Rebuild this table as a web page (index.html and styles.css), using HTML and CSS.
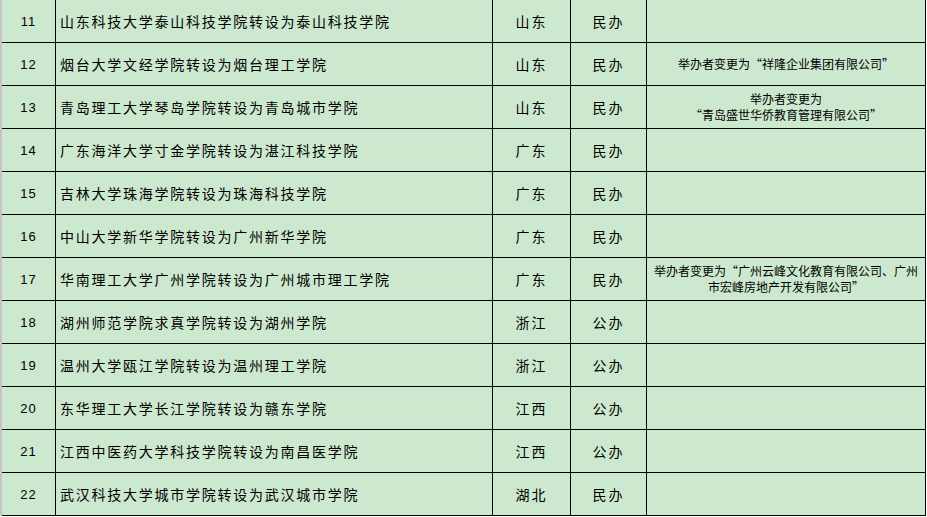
FILE: index.html
```html
<!DOCTYPE html>
<html lang="zh-CN">
<head>
<meta charset="utf-8">
<title>转设院校名单</title>
<link rel="stylesheet" href="styles.css">
</head>
<body>
<div class="sheet">
  <div class="cell num">11</div><div class="cell name">山东科技大学泰山科技学院转设为泰山科技学院</div><div class="cell prov">山东</div><div class="cell kind">民办</div><div class="cell note"></div>
  <div class="cell num">12</div><div class="cell name">烟台大学文经学院转设为烟台理工学院</div><div class="cell prov">山东</div><div class="cell kind">民办</div><div class="cell note">举办者变更为“祥隆企业集团有限公司”</div>
  <div class="cell num">13</div><div class="cell name">青岛理工大学琴岛学院转设为青岛城市学院</div><div class="cell prov">山东</div><div class="cell kind">民办</div><div class="cell note">举办者变更为<br>“青岛盛世华侨教育管理有限公司”</div>
  <div class="cell num">14</div><div class="cell name">广东海洋大学寸金学院转设为湛江科技学院</div><div class="cell prov">广东</div><div class="cell kind">民办</div><div class="cell note"></div>
  <div class="cell num">15</div><div class="cell name">吉林大学珠海学院转设为珠海科技学院</div><div class="cell prov">广东</div><div class="cell kind">民办</div><div class="cell note"></div>
  <div class="cell num">16</div><div class="cell name">中山大学新华学院转设为广州新华学院</div><div class="cell prov">广东</div><div class="cell kind">民办</div><div class="cell note"></div>
  <div class="cell num">17</div><div class="cell name">华南理工大学广州学院转设为广州城市理工学院</div><div class="cell prov">广东</div><div class="cell kind">民办</div><div class="cell note">举办者变更为“广州云峰文化教育有限公司、广州<br>市宏峰房地产开发有限公司”</div>
  <div class="cell num">18</div><div class="cell name">湖州师范学院求真学院转设为湖州学院</div><div class="cell prov">浙江</div><div class="cell kind">公办</div><div class="cell note"></div>
  <div class="cell num">19</div><div class="cell name">温州大学瓯江学院转设为温州理工学院</div><div class="cell prov">浙江</div><div class="cell kind">公办</div><div class="cell note"></div>
  <div class="cell num">20</div><div class="cell name">东华理工大学长江学院转设为赣东学院</div><div class="cell prov">江西</div><div class="cell kind">公办</div><div class="cell note"></div>
  <div class="cell num">21</div><div class="cell name">江西中医药大学科技学院转设为南昌医学院</div><div class="cell prov">江西</div><div class="cell kind">公办</div><div class="cell note"></div>
  <div class="cell num">22</div><div class="cell name">武汉科技大学城市学院转设为武汉城市学院</div><div class="cell prov">湖北</div><div class="cell kind">民办</div><div class="cell note"></div>
</div>
</body>
</html>
```
FILE: styles.css
```css
html, body {
  margin: 0;
  padding: 0;
  background: #ffffff;
}

.sheet {
  display: grid;
  grid-template-columns: 53px 436px 77px 75px 278px;
  grid-auto-rows: 42px;
  gap: 1px;
  width: max-content;
  background: #000000;
  border-left: 2px solid #c4c4c4;
  padding: 0 1px 1px 0;
}

.cell {
  background: #cce8cf;
  display: flex;
  align-items: center;
  color: #000000;
  font-family: "Noto Sans CJK SC", sans-serif;
  overflow: hidden;
}

.num {
  justify-content: center;
  font-family: "Liberation Sans", "Noto Sans CJK SC", sans-serif;
  font-size: 13px;
  letter-spacing: 1px;
}

.name {
  padding-left: 4px;
  font-size: 14px;
  letter-spacing: 1.75px;
  white-space: nowrap;
}

.prov,
.kind {
  justify-content: center;
  font-size: 14px;
  letter-spacing: 2px;
}

.note {
  justify-content: center;
  text-align: center;
  font-size: 12px;
  line-height: 16px;
}
```
